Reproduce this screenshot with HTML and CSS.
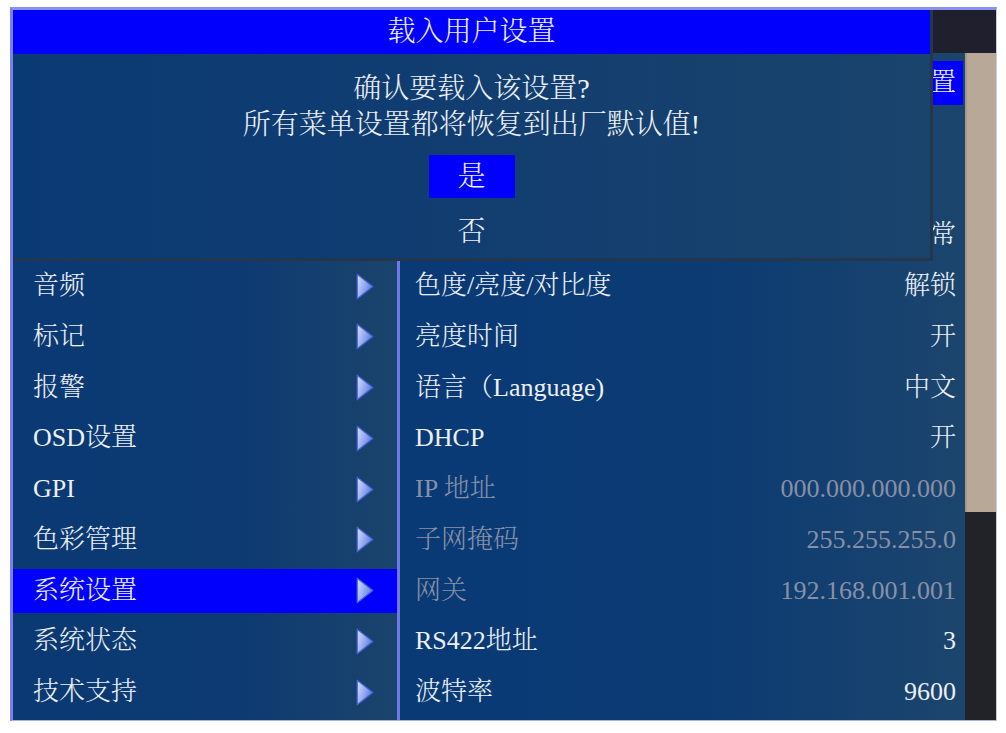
FILE: index.html
```html
<!DOCTYPE html>
<html lang="zh-CN">
<head>
<meta charset="utf-8">
<title>载入用户设置</title>
<link rel="stylesheet" href="styles.css">
</head>
<body>
<div class="screen">
  <div class="header"></div>
  <div class="main">
    <ul class="menu">
      <li class="item"><span></span><svg class="arrow" viewBox="0 0 18 27"><use href="#tri"/></svg></li>
      <li class="item"><span></span><svg class="arrow" viewBox="0 0 18 27"><use href="#tri"/></svg></li>
      <li class="item"><span></span><svg class="arrow" viewBox="0 0 18 27"><use href="#tri"/></svg></li>
      <li class="item"><span></span><svg class="arrow" viewBox="0 0 18 27"><use href="#tri"/></svg></li>
      <li class="item"><span>音频</span><svg class="arrow" viewBox="0 0 18 27"><use href="#tri"/></svg></li>
      <li class="item"><span>标记</span><svg class="arrow" viewBox="0 0 18 27"><use href="#tri"/></svg></li>
      <li class="item"><span>报警</span><svg class="arrow" viewBox="0 0 18 27"><use href="#tri"/></svg></li>
      <li class="item"><span>OSD设置</span><svg class="arrow" viewBox="0 0 18 27"><use href="#tri"/></svg></li>
      <li class="item"><span>GPI</span><svg class="arrow" viewBox="0 0 18 27"><use href="#tri"/></svg></li>
      <li class="item"><span>色彩管理</span><svg class="arrow" viewBox="0 0 18 27"><use href="#tri"/></svg></li>
      <li class="item active"><span>系统设置</span><svg class="arrow" viewBox="0 0 18 27"><use href="#tri"/></svg></li>
      <li class="item"><span>系统状态</span><svg class="arrow" viewBox="0 0 18 27"><use href="#tri"/></svg></li>
      <li class="item"><span>技术支持</span><svg class="arrow" viewBox="0 0 18 27"><use href="#tri"/></svg></li>
    </ul>
    <div class="sep"></div>
    <ul class="list">
      <li class="row active"><span class="lbl"></span><span class="val">设置</span></li>
      <li class="row"><span class="lbl"></span><span class="val"></span></li>
      <li class="row"><span class="lbl"></span><span class="val"></span></li>
      <li class="row"><span class="lbl"></span><span class="val">正常</span></li>
      <li class="row"><span class="lbl">色度/亮度/对比度</span><span class="val">解锁</span></li>
      <li class="row"><span class="lbl">亮度时间</span><span class="val">开</span></li>
      <li class="row"><span class="lbl">语言（Language)</span><span class="val">中文</span></li>
      <li class="row"><span class="lbl">DHCP</span><span class="val">开</span></li>
      <li class="row disabled"><span class="lbl">IP 地址</span><span class="val">000.000.000.000</span></li>
      <li class="row disabled"><span class="lbl">子网掩码</span><span class="val">255.255.255.0</span></li>
      <li class="row disabled"><span class="lbl">网关</span><span class="val">192.168.001.001</span></li>
      <li class="row"><span class="lbl">RS422地址</span><span class="val">3</span></li>
      <li class="row"><span class="lbl">波特率</span><span class="val">9600</span></li>
    </ul>
    <div class="scroll"><div class="thumb"></div></div>
  </div>

  <div class="dialog">
    <div class="dlg-title">载入用户设置</div>
    <div class="dlg-body">
      <p class="msg">确认要载入该设置?<br>所有菜单设置都将恢复到出厂默认值!</p>
      <div class="opt selected">是</div>
      <div class="opt">否</div>
    </div>
  </div>
</div>

<svg class="defs" width="0" height="0" aria-hidden="true">
  <defs>
    <linearGradient id="triGrad" x1="0" y1="0.2" x2="1" y2="0.7">
      <stop offset="0" stop-color="#cdd8fb"/>
      <stop offset="0.5" stop-color="#93a8f0"/>
      <stop offset="1" stop-color="#5270e2"/>
    </linearGradient>
    <polygon id="tri" points="1.2,1.2 16.8,13.5 1.2,25.8" fill="url(#triGrad)" stroke="#4462d6" stroke-width="1.2" stroke-linejoin="round"/>
  </defs>
</svg>
</body>
</html>
```

FILE: styles.css
```css
* {
  box-sizing: border-box;
}

html, body {
  margin: 0;
  padding: 0;
  background: #ffffff;
}

body {
  font-family: "Liberation Serif", "Noto Serif CJK SC", "Noto Sans CJK SC", serif;
  font-weight: 300;
  color: #eceff4;
}

.defs {
  position: absolute;
  width: 0;
  height: 0;
}

.screen {
  position: relative;
  margin: 7px 0 0 10px;
  width: 987px;
  height: 714px;
  border-top: 3px solid #8a90f2;
  border-left: 3px solid #7a80ee;
  border-right: 1px solid #c9ccd8;
  border-bottom: 1px solid #a9b4dc;
  background: #1e1e2c;
}

.header {
  height: 43px;
  background: #1f1f2d;
}

.main {
  display: grid;
  grid-template-columns: 384px 3px 565px 31px;
  height: 667px;
}

.menu, .list {
  list-style: none;
  margin: 0;
  padding: 8px 0 6px;
  display: flex;
  flex-direction: column;
  gap: 6.75px;
}

.menu {
  background: linear-gradient(to right, #0a3973 0%, #0d3a72 60%, #1b446b 100%);
}

.list {
  background: linear-gradient(to right, #093a76 0%, #0c3b73 55%, #1c456d 100%);
}

.item, .row {
  height: 44px;
  display: flex;
  align-items: center;
  font-size: 26px;
  line-height: 44px;
  white-space: nowrap;
}

.item {
  padding-left: 20px;
  padding-right: 23px;
  justify-content: space-between;
}

.item.active {
  background: #0000fc;
}

.arrow {
  width: 18px;
  height: 27px;
  display: block;
}

.sep {
  background: #6f78ea;
}

.row {
  padding-left: 15px;
  padding-right: 9px;
  justify-content: space-between;
}

.row.active {
  background: #0000fc;
  margin-right: 2px;
  padding-right: 7px;
}

.row.disabled {
  color: #8790a6;
}

.scroll {
  display: flex;
  flex-direction: column;
  background: #222229;
}

.thumb {
  height: 459px;
  background: #b8a897;
  border-left: 2px solid #a99886;
}

.dialog {
  position: absolute;
  top: 0;
  left: 0;
  width: 920px;
  height: 251px;
  border-right: 3px solid #25364c;
  border-bottom: 3px solid #25364c;
  display: flex;
  flex-direction: column;
}

.dlg-title {
  height: 44px;
  background: #0000fc;
  font-size: 28px;
  line-height: 44px;
  text-align: center;
  color: #eef0f6;
}

.dlg-body {
  flex: 1;
  background: linear-gradient(to right, #0a3a74 0%, #113d70 50%, #1a446c 100%);
  padding-top: 17px;
  display: flex;
  flex-direction: column;
  align-items: center;
}

.msg {
  margin: 0;
  font-size: 28px;
  line-height: 36px;
  text-align: center;
}

.opt {
  width: 86px;
  height: 43px;
  line-height: 43px;
  font-size: 28px;
  text-align: center;
  margin-top: 12px;
}

.opt.selected {
  margin-top: 12px;
  background: #0000fc;
}
```
